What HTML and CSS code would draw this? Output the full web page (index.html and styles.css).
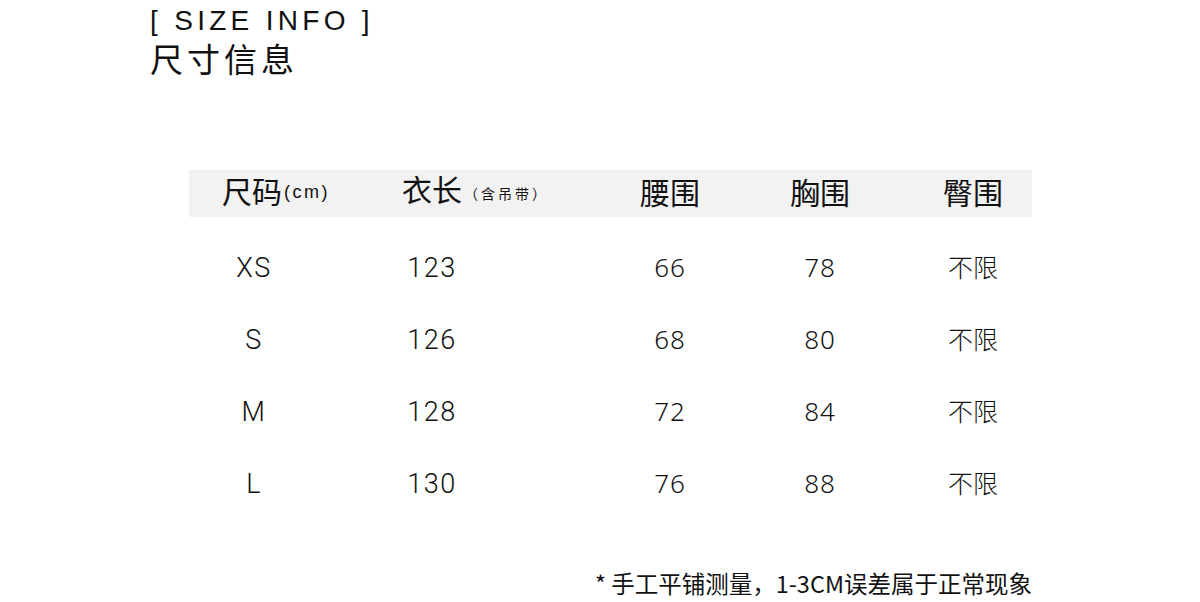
FILE: index.html
```html
<!DOCTYPE html>
<html lang="zh">
<head>
<meta charset="utf-8">
<title>尺寸信息</title>
<link rel="stylesheet" href="styles.css">
</head>
<body>
<div class="page">
  <header class="title">
    <div class="title-en">[ SIZE INFO ]</div>
    <div class="title-cn">尺寸信息</div>
  </header>

  <section class="table">
    <div class="head">
      <div class="hcell h1">尺码<span class="unit">(cm)</span></div>
      <div class="hcell h2">衣长<span class="note">（含吊带）</span></div>
      <div class="hcell hc">腰围</div>
      <div class="hcell hc">胸围</div>
      <div class="hcell hc">臀围</div>
    </div>

    <div class="row">
      <div class="cell lat">XS</div>
      <div class="cell lat">123</div>
      <div class="cell num">66</div>
      <div class="cell num">78</div>
      <div class="cell cjk">不限</div>
    </div>
    <div class="row">
      <div class="cell lat">S</div>
      <div class="cell lat">126</div>
      <div class="cell num">68</div>
      <div class="cell num">80</div>
      <div class="cell cjk">不限</div>
    </div>
    <div class="row">
      <div class="cell lat">M</div>
      <div class="cell lat">128</div>
      <div class="cell num">72</div>
      <div class="cell num">84</div>
      <div class="cell cjk">不限</div>
    </div>
    <div class="row">
      <div class="cell lat">L</div>
      <div class="cell lat">130</div>
      <div class="cell num">76</div>
      <div class="cell num">88</div>
      <div class="cell cjk">不限</div>
    </div>
  </section>

  <p class="footnote">* 手工平铺测量，1-3CM误差属于正常现象</p>
</div>
</body>
</html>
```

FILE: styles.css
```css
html, body {
  margin: 0;
  padding: 0;
  background: #ffffff;
  color: #111111;
}

.page {
  width: 1200px;
  height: 602px;
  overflow: hidden;
  font-family: "Noto Sans CJK SC", "Noto Sans", sans-serif;
}

.title {
  padding: 4px 0 0 150px;
}

.title-en {
  font-family: "Liberation Sans", "DejaVu Sans", sans-serif;
  font-size: 28px;
  line-height: 34px;
  letter-spacing: 4.3px;
  color: #111;
}

.title-cn {
  font-family: "Noto Sans CJK SC", sans-serif;
  font-size: 33px;
  line-height: 40px;
  letter-spacing: 4px;
  color: #111;
}

.table {
  margin: 92px 0 0 189px;
  width: 843px;
}

.head,
.row {
  display: grid;
  grid-template-columns: 178px 238px 150px 153px 100px;
  padding-left: 15px;
  align-items: center;
}

.head {
  height: 47px;
  background: #f2f2f2;
  margin-bottom: 15px;
}

.hcell {
  font-size: 30px;
  line-height: 37px;
  padding-bottom: 10px;
  white-space: nowrap;
  color: #111;
}

.h1 {
  padding-left: 18px;
}

.h2 {
  padding-left: 20px;
}

.hc {
  width: 100px;
  text-align: center;
}

.unit {
  font-family: "Liberation Sans", sans-serif;
  font-size: 18px;
  letter-spacing: 2.5px;
  vertical-align: 5px;
  margin-left: 2px;
}

.note {
  font-size: 14px;
  letter-spacing: 3px;
  vertical-align: 2px;
  margin-left: 2px;
}

.row {
  height: 72px;
}

.cell {
  width: 100px;
  text-align: center;
  font-size: 26px;
  line-height: 72px;
  color: #111;
}

.lat {
  font-family: "Roboto", "Liberation Sans", sans-serif;
  font-weight: 300;
  font-size: 27px;
  letter-spacing: 1.5px;
}

.num {
  font-family: "Noto Sans", "Open Sans", sans-serif;
  font-weight: 300;
  font-size: 26px;
  letter-spacing: 1px;
  line-height: 70px;
  padding-bottom: 2px;
}

.cjk {
  font-family: "Noto Sans CJK SC", sans-serif;
  font-weight: 300;
  font-size: 25px;
  line-height: 68px;
  padding-bottom: 4px;
}

.footnote {
  margin: 48px 0 0 0;
  width: 1032px;
  text-align: right;
  font-family: "Noto Sans CJK SC", sans-serif;
  font-size: 23.5px;
  line-height: 30px;
  color: #111;
}
```
